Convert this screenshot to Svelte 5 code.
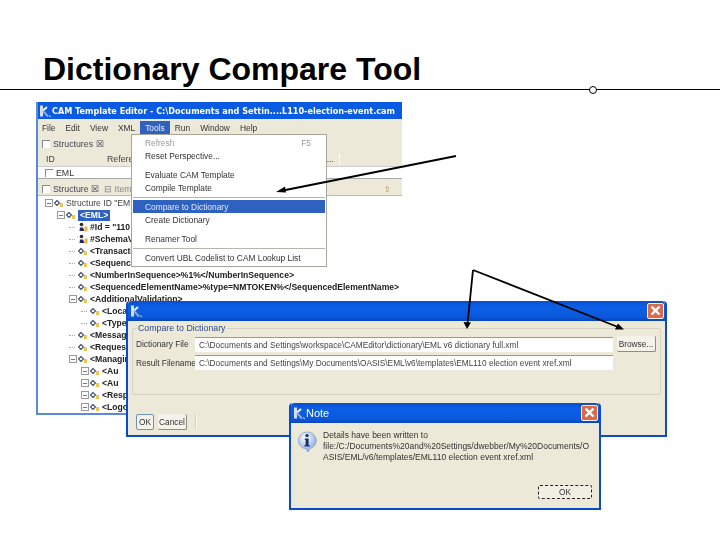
<script>
  const menuBar = ['File', 'Edit', 'View', 'XML', 'Tools', 'Run', 'Window', 'Help'];

  const menu = [
    { label: 'Refresh', key: 'F5', off: true },
    { label: 'Reset Perspective...' },
    { gap: true },
    { label: 'Evaluate CAM Template' },
    { label: 'Compile Template' },
    { line: true },
    { label: 'Compare to Dictionary', on: true },
    { label: 'Create Dictionary' },
    { gap: true },
    { label: 'Renamer Tool' },
    { line: true },
    { label: 'Convert UBL Codelist to CAM Lookup List' }
  ];

  // only the part of each label that isn't hidden by the menu or the dialogs
  const tree = [
    { depth: 0, text: 'Structure ID "EM', plain: true, open: true },
    { depth: 1, text: '<EML>', sel: true, open: true },
    { depth: 2, text: '#Id = "110', attr: true },
    { depth: 2, text: '#SchemaV', attr: true },
    { depth: 2, text: '<Transacti' },
    { depth: 2, text: '<Sequence' },
    { depth: 2, text: '<NumberInSequence>%1%</NumberInSequence>' },
    { depth: 2, text: '<SequencedElementName>%type=NMTOKEN%</SequencedElementName>' },
    { depth: 2, text: '<AdditionalValidation>', open: true },
    { depth: 3, text: '<Loca' },
    { depth: 3, text: '<Type' },
    { depth: 2, text: '<Messag' },
    { depth: 2, text: '<Reques' },
    { depth: 2, text: '<Managin', open: true },
    { depth: 3, text: '<Au', open: true },
    { depth: 3, text: '<Au', open: true },
    { depth: 3, text: '<Resp', open: true },
    { depth: 3, text: '<Logo', open: true }
  ];
</script>

{#snippet appIcon()}
  <svg class="app-icon" viewBox="0 0 14 14" width="14" height="14">
    <path d="M3.5 1.5v11" stroke="#d5dfee" stroke-width="3" fill="none" />
    <path d="M5 6.5 9 3" stroke="#f2f5fa" stroke-width="2" fill="none" />
    <path d="M5 7l5 5.5" stroke="#8fa9d2" stroke-width="2" fill="none" />
    <path d="M11 11.5l2 1.5" stroke="#9ab4dc" stroke-width="1.2" fill="none" />
  </svg>
{/snippet}

{#snippet closeBtn()}
  <div class="close">
    <svg viewBox="0 0 16 16" width="15" height="14">
      <path d="M3.5 3 12.5 12M12.5 3 3.5 12" stroke="#fff" stroke-width="2.8" fill="none" />
    </svg>
  </div>
{/snippet}

<main class="page">
  <header class="heading">
    <h1>Dictionary Compare Tool</h1>
  </header>
  <div class="rule"><span class="knob"></span></div>

  <div class="canvas">
    <section class="win editor">
      <div class="titlebar">
        {@render appIcon()}
        <span class="wide">CAM Template Editor - C:\Documents and Settin....L110-election-event.cam</span>
      </div>
      <nav class="menubar">
        {#each menuBar as item}
          <span class:open={item === 'Tools'}>{item}</span>
        {/each}
      </nav>
      <div class="view-tabs">
        <span class="tab"><i></i>Structures ☒</span>
      </div>
      <div class="table-head">
        <span class="col-id">ID</span><span>Reference</span>
        <span class="dots">...</span>
      </div>
      <div class="table-row"><i></i>EML</div>
      <div class="view-tabs second">
        <span class="tab"><i></i>Structure ☒</span>
        <span class="tab ghost">⊟ Item</span>
        <span class="tools">⇧</span>
      </div>
      <div class="tree">
        {#each tree as row}
          <div class="node" class:plain={row.plain} style="padding-left: {row.depth * 12 + 4}px">
            {#if row.open}<span class="box"></span>{:else}<span class="stub"></span>{/if}
            {#if row.attr}
              <svg class="ico" viewBox="0 0 11 10" width="11" height="10">
                <circle cx="4.5" cy="2.5" r="1.8" fill="#2b2b2b" />
                <path d="M3 5.5h3l1.5 3.5h-5z" fill="#26266e" />
                <rect x="7.5" y="4.5" width="3" height="5" fill="#e8b93a" />
              </svg>
            {:else}
              <svg class="ico" viewBox="0 0 11 10" width="11" height="10">
                <path d="M4 2.5 1.5 5 4 7.5 6.5 5z" fill="none" stroke="#3c4f6a" stroke-width="1.1" />
                <rect x="7" y="5" width="3" height="4" fill="#eec64f" />
              </svg>
            {/if}
            <span class:sel={row.sel}>{row.text}</span>
          </div>
        {/each}
      </div>

      <div class="popup">
        {#each menu as m}
          {#if m.gap}
            <div class="gap"></div>
          {:else if m.line}
            <div class="line"></div>
          {:else}
            <div class="entry" class:off={m.off} class:on={m.on}>
              <span>{m.label}</span>
              {#if m.key}<span>{m.key}</span>{/if}
            </div>
          {/if}
        {/each}
      </div>
    </section>

    <section class="win compare">
      <div class="titlebar tall">
        {@render appIcon()}
        {@render closeBtn()}
      </div>
      <div class="body">
        <fieldset>
          <legend>Compare to Dictionary</legend>
          <div class="form">
            <span>Dictionary File</span>
            <div class="field">C:\Documents and Settings\workspace\CAMEditor\dictionary\EML v6 dictionary full.xml</div>
            <button>Browse...</button>
            <span>Result Filename</span>
            <div class="field">C:\Documents and Settings\My Documents\OASIS\EML\v6\templates\EML110 election event xref.xml</div>
          </div>
        </fieldset>
        <div class="actions">
          <button class="ok">OK</button>
          <button>Cancel</button>
        </div>
      </div>
    </section>

    <section class="win note">
      <div class="titlebar tall">
        {@render appIcon()}
        <span class="note-title">Note</span>
        {@render closeBtn()}
      </div>
      <div class="note-body">
        <div class="note-main">
          <svg viewBox="0 0 20 22" width="20" height="22">
            <defs>
              <radialGradient id="bub" cx="40%" cy="30%" r="75%">
                <stop offset="0" stop-color="#ffffff" />
                <stop offset="1" stop-color="#7fa3d8" />
              </radialGradient>
            </defs>
            <path d="M10 1a9 8.5 0 0 1 3 16.6L11 21l-2-3.1A9 8.5 0 0 1 10 1z" fill="url(#bub)" stroke="#7d9bc8" stroke-width=".7" />
            <circle cx="10" cy="4.6" r="1.7" fill="#14306f" />
            <path d="M7.8 7.6h3.8v6.6h1.2v1.4H7.4v-1.4h1.2V9h-.8z" fill="#14306f" />
          </svg>
          <p>Details have been written to<br />file:/C:/Documents%20and%20Settings/dwebber/My%20Documents/O<br />ASIS/EML/v6/templates/EML110 election event xref.xml</p>
        </div>
        <div class="note-foot"><button class="dflt">OK</button></div>
      </div>
    </section>

    <svg class="arrows" viewBox="0 0 720 540" width="720" height="540">
      <g fill="none" stroke="#000" stroke-width="1.8">
        <path d="M456 156 283 190.5" />
        <path d="M473 270 467.5 324" />
        <path d="M473 270 618 327" />
      </g>
      <path d="M276 192 285 186.5 286 192.5z" fill="#000" />
      <path d="M467 329 463.5 322 471 322.5z" fill="#000" />
      <path d="M624 329.5 615 329.5 618 323.5z" fill="#000" />
    </svg>
  </div>
</main>

<style>
  :global(body) {
    background: #fff;
  }

  .page {
    width: 720px;
    height: 540px;
    overflow: hidden;
    position: relative;
    font-family: "Liberation Sans", Arial, sans-serif;
  }

  .heading {
    padding: 50px 0 0 43px;
    height: 39px;
  }

  h1 {
    margin: 0;
    font-size: 32px;
    line-height: 38px;
    font-weight: bold;
    color: #000;
  }

  .rule {
    height: 1px;
    background: #000;
    position: relative;
  }

  .knob {
    position: absolute;
    left: 589px;
    top: -3px;
    width: 6px;
    height: 6px;
    border: 1px solid #000;
    border-radius: 50%;
    background: #fff;
  }

  .canvas {
    position: absolute;
    inset: 0;
    pointer-events: none;
  }

  .arrows {
    position: absolute;
    left: 0;
    top: 0;
  }

  /* windows sit on a free canvas, xp look */
  .win {
    position: absolute;
    box-sizing: border-box;
    background: #ece9d8;
    font-family: "Liberation Sans", Arial, sans-serif;
    font-size: 8.3px;
    color: #333;
    filter: blur(0.35px);
  }

  .titlebar {
    height: 17px;
    display: flex;
    align-items: center;
    padding: 0;
    color: #fff;
    background: #0b5be2;
    font-family: "DejaVu Sans", sans-serif;
    font-weight: bold;
    font-size: 8.1px;
  }

  .wide {
    white-space: nowrap;
  }

  .tall {
    height: 20px;
    padding: 0 1px;
    background: linear-gradient(#0a4fd0, #0b5fe6 30%, #0a58dc 80%, #0845b8);
    border-radius: 4px 4px 0 0;
  }

  .close {
    margin-left: auto;
    width: 15px;
    height: 14px;
    border: 1px solid #f3f3f3;
    border-radius: 2px;
    background: #dc6a48;
    display: flex;
  }

  .editor {
    left: 36px;
    top: 102px;
    width: 366px;
    height: 313px;
    border: solid #5a8ad8;
    border-width: 0 0 2px 2px;
  }

  .menubar {
    height: 17px;
    display: flex;
    align-items: center;
    gap: 10px;
    padding-left: 4px;
    font-size: 8.4px;
  }

  .menubar .open {
    background: #2f62bf;
    color: #e6ecf8;
    margin: 0 -5px;
    padding: 0 5px;
    line-height: 15px;
    align-self: flex-end;
  }

  .view-tabs {
    height: 14px;
    margin-top: 1px;
    display: flex;
    align-items: center;
    gap: 5px;
    padding-left: 4px;
  }

  .tab {
    display: flex;
    align-items: center;
    gap: 3px;
    color: #445;
    white-space: nowrap;
    font-size: 8.8px;
  }

  .tab i,
  .table-row i {
    display: block;
    width: 7px;
    height: 7px;
    background: #fff;
    border: 1px solid #888;
    border-width: 1px 0 0 1px;
  }

  .tab.ghost {
    color: #888;
  }

  .table-head {
    height: 14px;
    margin-top: 1px;
    display: flex;
    align-items: center;
    color: #444;
    border-bottom: 1px solid #ccc;
    padding-left: 8px;
    font-size: 8.8px;
  }

  .col-id {
    width: 61px;
  }

  .dots {
    margin-left: auto;
    margin-right: 62px;
    padding-right: 5px;
    border-right: 1px solid #fff;
  }

  .table-row {
    height: 11px;
    background: #fff;
    display: flex;
    align-items: center;
    gap: 3px;
    padding-left: 7px;
    font-size: 8.8px;
  }

  .view-tabs.second {
    height: 18px;
    margin-top: 0;
    align-items: flex-end;
    border-top: 1px solid #aaa;
    border-bottom: 1px solid #bbb;
    box-sizing: border-box;
    padding-bottom: 1px;
  }

  .tools {
    margin-left: auto;
    margin-right: 11px;
    color: #b58a1e;
  }

  .tree {
    background: #fff;
    height: 217px;
    padding-top: 1px;
    box-sizing: border-box;
    overflow: hidden;
  }

  .node {
    height: 12px;
    display: flex;
    align-items: center;
    gap: 2px;
    white-space: nowrap;
    font-weight: bold;
    font-size: 8.6px;
    color: #222;
    margin-left: 3px;
  }

  .node.plain {
    font-weight: normal;
    color: #444;
  }

  .box,
  .stub {
    flex: none;
    width: 6px;
    height: 6px;
  }

  .box {
    border: 1px solid #999;
    margin-right: -2px;
    background: linear-gradient(#777, #777) center / 4px 1px no-repeat;
  }

  .stub {
    border-bottom: 1px dotted #aaa;
    height: 3px;
    margin-bottom: 3px;
  }

  .ico {
    flex: none;
  }

  .sel {
    background: #2f62bf;
    color: #fff;
    padding: 0 2px;
    line-height: 11px;
  }

  .popup {
    position: absolute;
    left: 93px;
    top: 32px;
    width: 196px;
    height: 133px;
    box-sizing: border-box;
    background: #fff;
    border: 1px solid #a7a69b;
    padding: 1px;
    font-size: 8.4px;
    white-space: nowrap;
  }

  .entry {
    height: 13px;
    display: flex;
    justify-content: space-between;
    align-items: center;
    padding: 0 14px 0 12px;
    color: #333;
  }

  .entry.off {
    color: #999;
  }

  .entry.on {
    background: #2f62bf;
    color: #dfe6f5;
  }

  .gap {
    height: 6px;
  }

  .line {
    height: 1px;
    background: #b8b6a8;
    margin: 3px 0 2px;
  }

  .compare {
    left: 126px;
    top: 301px;
    width: 541px;
    height: 136px;
    border: solid #0a4cc8;
    border-width: 0 2px 2px 2px;
    border-radius: 4px 4px 0 0;
  }

  .body {
    padding: 2px 4px 0;
  }

  fieldset {
    margin: 0;
    padding: 0 4px 0 3px;
    height: 72px;
    box-sizing: border-box;
    border: 1px solid #d5d2c2;
    border-radius: 2px;
  }

  legend {
    color: #2b4a8c;
    padding: 0 1px;
    margin-left: 1px;
    font-size: 8.8px;
  }

  .form {
    display: grid;
    grid-template-columns: 59px 418px 43px;
    row-gap: 3px;
    align-items: center;
    margin-top: 3px;
  }

  .form > span {
    white-space: nowrap;
    color: #333;
  }

  .field {
    height: 15px;
    box-sizing: border-box;
    background: #fff;
    border-top: 1px solid #999;
    line-height: 14px;
    padding-left: 4px;
    white-space: nowrap;
    overflow: hidden;
    color: #444;
  }

  button {
    font: inherit;
    color: #333;
    background: #f4f2ea;
    border: 1px solid #8d8d84;
    border-width: 0 1px 1px 0;
    border-radius: 2px;
    padding: 0;
    height: 16px;
  }

  .form button {
    margin-left: 4px;
    width: 39px;
  }

  .actions {
    display: flex;
    gap: 4px;
    margin-top: 19px;
    margin-left: 4px;
    width: 59px;
    border-right: 1px solid #d5d2c2;
    box-shadow: 1px 0 0 #f8f7f0;
  }

  .actions button {
    width: 29px;
  }

  .actions .ok {
    width: 18px;
    border: 1px solid #6f8fc0;
  }

  .note {
    left: 289px;
    top: 403px;
    width: 312px;
    height: 107px;
    border: solid #0a4cc8;
    border-width: 0 2px 2px 2px;
    border-radius: 4px 4px 0 0;
  }

  .note-title {
    font-family: "Liberation Sans", Arial, sans-serif;
    font-weight: normal;
    font-size: 11px;
  }

  .note-body {
    padding: 7px 7px 0 6px;
  }

  .note-main {
    display: flex;
    gap: 6px;
  }

  .note-main svg {
    flex: none;
    margin-top: 1px;
  }

  p {
    margin: 0;
    line-height: 11px;
    font-size: 8.5px;
    white-space: nowrap;
    color: #333;
  }

  .note-foot {
    display: flex;
    justify-content: flex-end;
    margin-top: 22px;
  }

  .dflt {
    width: 54px;
    height: 14px;
    background: #f1efe4;
    border: 1px dashed #222;
  }
</style>
